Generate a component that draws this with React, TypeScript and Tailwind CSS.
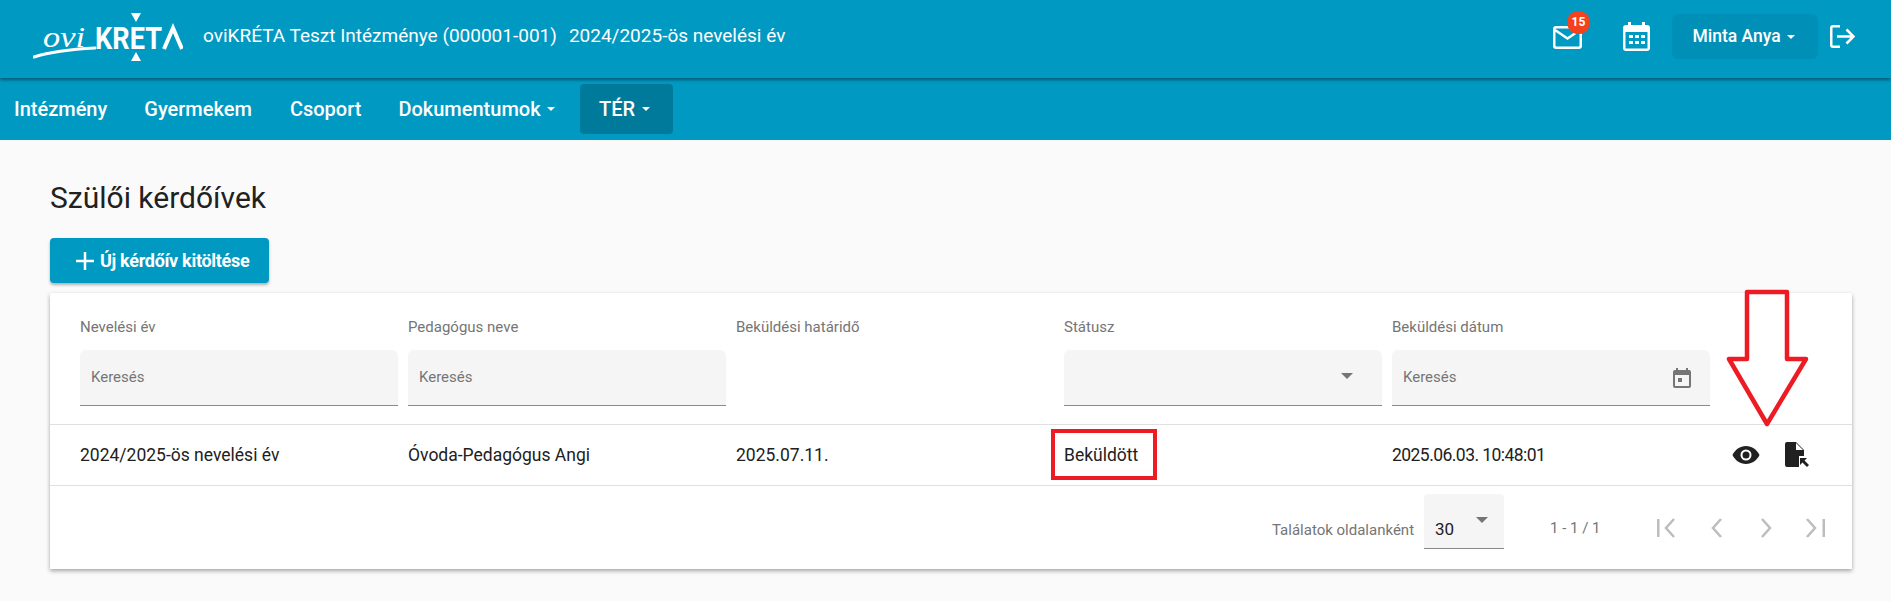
const Caret = ({ className = '' }: { className?: string }) => (
  <span className={`inline-block border-x-[4px] border-t-[4px] border-x-transparent border-t-white ${className}`} />
);

/** oviKRÉTA logo */
const Logo = () => (
  <svg width="150" height="50" viewBox="0 0 150 50" className="shrink-0">
    <text
      x="10"
      y="35"
      fontFamily="Liberation Serif, serif"
      fontStyle="italic"
      fontSize="30"
      fill="#fff"
      textLength="42"
      lengthAdjust="spacingAndGlyphs"
    >
      ovi
    </text>
    <path d="M1 45C20 39 42 37 62 36" stroke="#fff" strokeWidth="3" fill="none" strokeLinecap="round" />
    <text
      x="62"
      y="37"
      fontFamily="Roboto, sans-serif"
      fontWeight="700"
      fontSize="31"
      fill="#fff"
      textLength="67"
      lengthAdjust="spacingAndGlyphs"
    >
      KRET
    </text>
    <path d="M131 37L140 16L149 37" stroke="#fff" strokeWidth="4" fill="none" />
    <path d="M98 1H108L103 10ZM98 49H108L103 40Z" fill="#fff" />
  </svg>
);

const CalendarIcon = () => (
  <svg width="18" height="20" viewBox="0 0 18 20" fill="none">
    <path d="M3 0h2v2h8V0h2v2h1a2 2 0 0 1 2 2v14a2 2 0 0 1-2 2H2a2 2 0 0 1-2-2V4a2 2 0 0 1 2-2h1Z M2 7v11h14V7Z" fill="#757575" fillRule="evenodd" />
    <rect x="5" y="10" width="4" height="4" fill="#757575" />
  </svg>
);

const FilterInput = ({ label, icon }: { label: string; icon?: boolean }) => (
  <div className="w-[328px] shrink-0 pr-[10px]">
    <div className="h-[20px] text-[15px] leading-[20px] text-[#757575]">{label}</div>
    <div className="mt-[13px] flex h-[56px] items-center justify-between rounded-t-[6px] border-b-[1px] border-[#8a8a8a] bg-[#f5f5f5] pl-[11px] pr-[19px] text-[15px] text-[#757575]">
      <span>Keresés</span>
      {icon && <CalendarIcon />}
    </div>
  </div>
);

const PagerIcon = ({ d, width }: { d: string; width: number }) => (
  <svg width={width} height="20" viewBox={`0 0 ${width} 20`} fill="none" stroke="#bdbdbd" strokeWidth="2.5">
    <path d={d} />
  </svg>
);

const App = () => {
  return (
    <div className="h-[601px] w-[1891px] overflow-hidden bg-[#fafafa] font-['Roboto',sans-serif] text-[#212121]">
      {/* Top header */}
      <header className="relative z-10 flex h-[78px] items-center bg-[#0099c2] pb-[5px] pl-[33px] pr-[36px] text-white shadow-[0_2px_3px_rgba(0,0,0,0.4)]">
        <Logo />
        <span className="ml-[20px] text-[19px]">oviKRÉTA Teszt Intézménye (000001-001)</span>
        <span className="ml-[12px] text-[19px]">2024/2025-ös nevelési év</span>
        <div className="ml-auto flex items-center">
          <div className="relative mr-[41px]">
            <svg width="29" height="23" viewBox="0 0 29 23" fill="none" stroke="#fff" strokeWidth="2.500" className="mt-[1px]">
              <rect x="1.250" y="1.250" width="26.500" height="20.500" rx="2" />
              <path d="M2 4L14.500 12.500L27 4" />
            </svg>
            <span className="absolute -right-[8px] -top-[14px] flex h-[23px] w-[23px] items-center justify-center rounded-full bg-[#f4411e] text-[12px] font-bold">
              15
            </span>
          </div>
          <svg width="27" height="29" viewBox="0 0 27 29" className="mr-[22px]">
            <path
              fillRule="evenodd"
              fill="#fff"
              d="M5 0h3v3h11V0h3v3h2a3 3 0 0 1 3 3v20a3 3 0 0 1-3 3H3a3 3 0 0 1-3-3V6a3 3 0 0 1 3-3h2Z M2.500 10v16a.5.5 0 0 0 .5.5h21a.5.5 0 0 0 .5-.5V10Z"
            />
            <path fill="#fff" d="M6 13h4v3H6zM12 13h4v3h-4zM18 13h4v3h-4zM6 19h4v3H6zM12 19h4v3h-4zM18 19h4v3h-4z" />
          </svg>
          <div className="flex h-[45px] w-[146px] items-center justify-center gap-[6px] rounded-[6px] bg-[#0090b7] pr-[3px] text-[17.5px] font-medium">
            Minta Anya <Caret />
          </div>
          <svg width="25" height="23" viewBox="0 0 25 23" fill="none" stroke="#fff" strokeWidth="2.500" className="ml-[12px]">
            <path d="M10 1.250H3a1.750 1.750 0 0 0-1.750 1.750v17A1.750 1.750 0 0 0 3 21.750h7" />
            <path d="M7 11.500H23M16.500 4.500L23.500 11.500L16.500 18.500" />
          </svg>
        </div>
      </header>

      {/* Main nav */}
      <nav className="flex h-[62px] items-center bg-[#0099c2] pl-[14px] text-[20px] font-medium text-white">
        <span>Intézmény</span>
        <span className="ml-[37px]">Gyermekem</span>
        <span className="ml-[38px]">Csoport</span>
        <span className="ml-[37px] flex items-center gap-[6px]">
          Dokumentumok <Caret />
        </span>
        <span className="ml-[25px] flex h-[50px] w-[93px] items-center justify-center gap-[7px] rounded-[4px] bg-[#007a9b] pr-[3px]">
          TÉR <Caret />
        </span>
      </nav>

      <main className="px-[50px] pt-[40px]">
        <h1 className="text-[30px] font-normal leading-[36px] text-[#212121]">Szülői kérdőívek</h1>

        <button
          type="button"
          className="mt-[22px] flex h-[45px] w-[219px] items-center rounded-[4px] bg-[#0099c2] pl-[20px] text-[18px] font-bold tracking-[-0.3px] text-white shadow-[0_2px_3px_rgba(0,0,0,0.3)]"
        >
          <svg width="30" height="30" viewBox="0 0 30 30" stroke="#fff" strokeWidth="2.500">
            <path d="M6 15H24M15 6V24" />
          </svg>
          Új kérdőív kitöltése
        </button>

        {/* Table card */}
        <section className="relative mt-[10px] h-[276px] w-[1802px] rounded-t-[2px] bg-white shadow-[0_2px_4px_rgba(0,0,0,0.35)]">
          <div className="flex h-[132px] border-b-[1px] border-[#e0e0e0] pl-[30px] pt-[24px]">
            <FilterInput label="Nevelési év" />
            <FilterInput label="Pedagógus neve" />
            <div className="w-[328px] shrink-0 text-[15px] leading-[20px] text-[#757575]">Beküldési határidő</div>
            <div className="w-[328px] shrink-0 pr-[10px]">
              <div className="h-[20px] text-[15px] leading-[20px] text-[#757575]">Státusz</div>
              <div className="mt-[13px] flex h-[56px] items-center justify-end rounded-t-[6px] border-b-[1px] border-[#8a8a8a] bg-[#f5f5f5] pr-[29px]">
                <span className="-mt-[3px] inline-block border-x-[6px] border-t-[6px] border-x-transparent border-t-[#757575]" />
              </div>
            </div>
            <FilterInput label="Beküldési dátum" icon />
          </div>

          <div className="flex h-[61px] items-center border-b-[1px] border-[#e0e0e0] pl-[30px] text-[17.5px]">
            <div className="w-[328px] shrink-0">2024/2025-ös nevelési év</div>
            <div className="w-[328px] shrink-0">Óvoda-Pedagógus Angi</div>
            <div className="w-[328px] shrink-0">2025.07.11.</div>
            <div className="w-[328px] shrink-0">Beküldött</div>
            <div className="w-[328px] shrink-0 tracking-[-0.55px]">2025.06.03. 10:48:01</div>
            <svg width="28" height="20" viewBox="0 0 28 20" className="ml-[12px]">
              <path
                fillRule="evenodd"
                fill="#212121"
                d="M14 1C8 1 3 4.800 0.500 10 3 15.200 8 19 14 19s11-3.800 13.500-9C25 4.800 20 1 14 1Zm0 3.500a5.500 5.500 0 1 1 0 11 5.500 5.500 0 0 1 0-11Zm0 2a3.500 3.500 0 1 0 0 7 3.500 3.500 0 0 0 0-7Z"
              />
            </svg>
            <svg width="24" height="26" viewBox="0 0 24 26" className="ml-[25px]">
              <path d="M2 0h9l8 8v6h-5v11H2a2 2 0 0 1-2-2V2a2 2 0 0 1 2-2Z" fill="#212121" />
              <path d="M11 1v7h7Z" fill="#fff" />
              <path d="M15 16h7l-2.500 2.500L24 23l-2 2-4.500-4.500L15 23Z" fill="#212121" />
            </svg>
          </div>

          {/* Pagination */}
          <div className="flex h-[83px] items-start pl-[1222px] text-[15px] text-[#757575]">
            <span className="mt-[33px] w-[152px]">Találatok oldalanként</span>
            <div className="mt-[8px] flex h-[55px] w-[80px] justify-between rounded-t-[4px] border-b-[1px] border-[#8a8a8a] bg-[#f5f5f5] pl-[11px] pr-[16px]">
              <span className="mt-[25px] text-[17px] leading-[20px] text-[#212121]">30</span>
              <span className="mt-[23px] inline-block h-0 border-x-[6px] border-t-[6px] border-x-transparent border-t-[#757575]" />
            </div>
            <span className="ml-[46px] mt-[31px] w-[107px]">1 - 1 / 1</span>
            <div className="mt-[32px] flex items-center">
              <PagerIcon width={18} d="M1.250 1V19M17 1L9 10L17 19" />
              <span className="ml-[35px]">
                <PagerIcon width={12} d="M11 1L3 10L11 19" />
              </span>
              <span className="ml-[39px]">
                <PagerIcon width={12} d="M1 1L9 10L1 19" />
              </span>
              <span className="ml-[33px]">
                <PagerIcon width={19} d="M1 1L9 10L1 19M17.750 1V19" />
              </span>
            </div>
          </div>
        </section>
      </main>

      {/* Red annotations over the screenshot */}
      <div className="absolute left-[1051px] top-[429px] h-[51px] w-[106px] border-[4px] border-[#ed1c24]" />
      <svg className="absolute left-[1720px] top-[285px]" width="92" height="145" viewBox="0 0 92 145">
        <path
          d="M27 7H67V74H86L47 139 9 74H27Z"
          fill="none"
          stroke="#ed1c24"
          strokeWidth="4.500"
          strokeLinejoin="round"
        />
      </svg>
    </div>
  );
};

export default App;
